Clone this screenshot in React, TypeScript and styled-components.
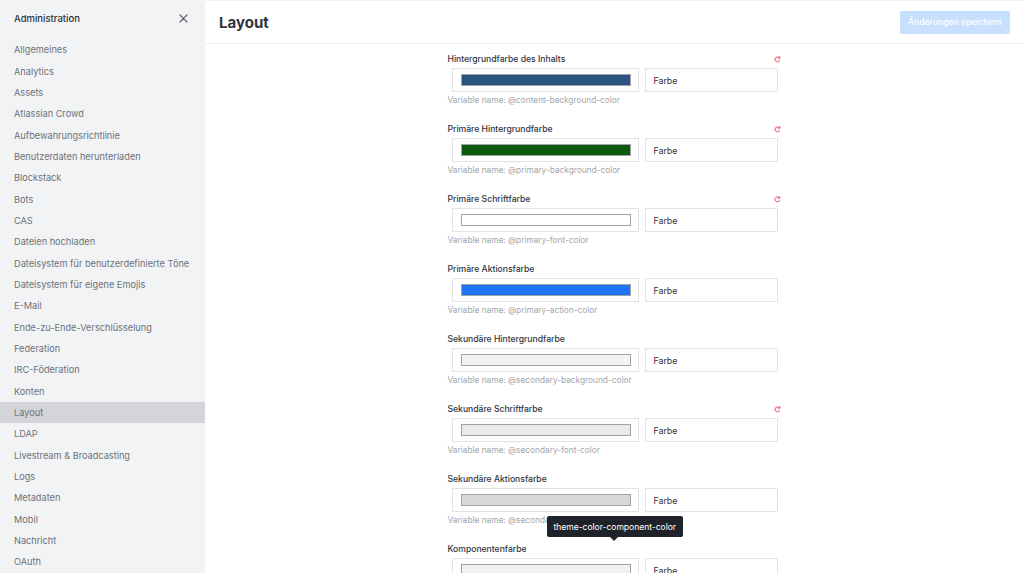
import React from "react";
import styled, { createGlobalStyle } from "styled-components";

const Global = createGlobalStyle`
  html, body { margin: 0; padding: 0; background: #fff; }
  body { font-family: Inter, "Noto Sans", "Liberation Sans", sans-serif; }
  * { box-sizing: border-box; }
`;

const Page = styled.div`
  display: flex;
  width: 1024px;
  height: 573px;
  overflow: hidden;
`;

const Sidebar = styled.aside`
  width: 205px;
  flex: none;
  background: #f2f3f5;
  display: flex;
  flex-direction: column;
`;

const SideHeader = styled.div`
  height: 36px;
  display: flex;
  align-items: center;
  justify-content: space-between;
  padding: 0 17px 0 14px;
  font-size: 9.5px;
  font-weight: 500;
  color: #2f343d;
`;

const CloseBtn = styled.span`
  display: flex;
  color: #6c727a;
`;

const NavList = styled.nav`
  padding-top: 3.33px;
  display: flex;
  flex-direction: column;
`;

const NavItem = styled.div<{ $active?: boolean }>`
  height: 21.33px;
  display: flex;
  align-items: center;
  padding-left: 14px;
  font-size: 9.2px;
  color: #6c727a;
  background: ${(p) => (p.$active ? "#d3d5d9" : "transparent")};
  white-space: nowrap;
`;

const Main = styled.main`
  flex: 1;
  display: flex;
  flex-direction: column;
  border-top: 1px solid #f0f1f3;
`;

const Header = styled.header`
  height: 43px;
  flex: none;
  display: flex;
  align-items: center;
  justify-content: space-between;
  padding: 0 14px 0 14px;
  border-bottom: 1px solid #eef0f2;
`;

const Title = styled.h1`
  margin: 0;
  font-size: 15px;
  font-weight: 700;
  color: #2f343d;
`;

const SaveButton = styled.button`
  width: 110px;
  height: 23px;
  border: none;
  border-radius: 2px;
  background: #c7e0fd;
  color: #fff;
  font-family: inherit;
  font-size: 8.6px;
  font-weight: 500;
  white-space: nowrap;
  padding: 0;
`;

const Scroll = styled.div`
  flex: 1;
  padding: 9px 1px 0 0;
  display: flex;
  justify-content: center;
`;

const Column = styled.div`
  width: 333px;
  position: relative;
  display: flex;
  flex-direction: column;
`;

const Field = styled.div`
  display: flex;
  flex-direction: column;
  margin-bottom: 17px;
`;

const LabelRow = styled.div`
  height: 12px;
  display: flex;
  align-items: center;
  justify-content: space-between;
  font-size: 8.6px;
  font-weight: 500;
  color: #2f343d;
  margin-bottom: 3px;
`;

const ResetIcon = styled.span`
  display: flex;
`;

const InputRow = styled.div`
  height: 24px;
  display: flex;
  gap: 6px;
  padding: 0 3px 0 4px;
`;

const SwatchBox = styled.div`
  width: 187px;
  flex: none;
  border: 1px solid #e1e3e6;
  display: flex;
  align-items: center;
  padding: 0 7px 0 8px;
`;

const Swatch = styled.div<{ $color: string }>`
  flex: 1;
  height: 12px;
  background: ${(p) => p.$color};
  border: 1px solid #9ea2a8;
`;

const TextBox = styled.div`
  flex: 1;
  border: 1px solid #e1e3e6;
  display: flex;
  align-items: center;
  padding-left: 8px;
  font-size: 8.8px;
  color: #2f343d;
`;

const Hint = styled.div`
  height: 12px;
  margin-top: 2px;
  display: flex;
  align-items: center;
  font-size: 8.3px;
  color: #a2a6ab;
`;

const Tooltip = styled.div`
  position: absolute;
  left: 99px;
  top: 463px;
  height: 21px;
  padding: 0 7px;
  display: flex;
  align-items: center;
  background: #1f2329;
  color: #fff;
  font-size: 8.5px;
  border-radius: 2px;
  white-space: nowrap;
  &::after {
    content: "";
    position: absolute;
    left: 63px;
    bottom: -4px;
    border-left: 4px solid transparent;
    border-right: 4px solid transparent;
    border-top: 4px solid #1f2329;
  }
`;

const navItems = [
  "Allgemeines",
  "Analytics",
  "Assets",
  "Atlassian Crowd",
  "Aufbewahrungsrichtlinie",
  "Benutzerdaten herunterladen",
  "Blockstack",
  "Bots",
  "CAS",
  "Dateien hochladen",
  "Dateisystem für benutzerdefinierte Töne",
  "Dateisystem für eigene Emojis",
  "E-Mail",
  "Ende-zu-Ende-Verschlüsselung",
  "Federation",
  "IRC-Föderation",
  "Konten",
  "Layout",
  "LDAP",
  "Livestream & Broadcasting",
  "Logs",
  "Metadaten",
  "Mobil",
  "Nachricht",
  "OAuth",
];

const fields = [
  { label: "Hintergrundfarbe des Inhalts", color: "#2a5580", variable: "@content-background-color", reset: true },
  { label: "Primäre Hintergrundfarbe", color: "#0c5a0c", variable: "@primary-background-color", reset: true },
  { label: "Primäre Schriftfarbe", color: "#ffffff", variable: "@primary-font-color", reset: true },
  { label: "Primäre Aktionsfarbe", color: "#1d74f5", variable: "@primary-action-color", reset: false },
  { label: "Sekundäre Hintergrundfarbe", color: "#f2f3f5", variable: "@secondary-background-color", reset: false },
  { label: "Sekundäre Schriftfarbe", color: "#eaeaea", variable: "@secondary-font-color", reset: true },
  { label: "Sekundäre Aktionsfarbe", color: "#d8d8d8", variable: "@secondary-action-color", reset: false },
  { label: "Komponentenfarbe", color: "#f0f0f0", variable: "@component-color", reset: false },
];

const Reset = () => (
  <svg width="7" height="7" viewBox="0 0 10 10" fill="none">
    <path d="M8.3 6.2A3.6 3.6 0 1 1 7.6 2.4" stroke="#f5455c" strokeWidth="1.4" strokeLinecap="round" />
    <path d="M8.2 0.8v2.3H5.9" stroke="#f5455c" strokeWidth="1.4" strokeLinecap="round" strokeLinejoin="round" />
  </svg>
);

export default function App() {
  return (
    <>
      <Global />
      <Page>
        <Sidebar>
          <SideHeader>
            <span>Administration</span>
            <CloseBtn>
              <svg width="9" height="9" viewBox="0 0 10 10">
                <path d="M1 1L9 9M9 1L1 9" stroke="#4a5058" strokeWidth="1.2" strokeLinecap="round" />
              </svg>
            </CloseBtn>
          </SideHeader>
          <NavList>
            {navItems.map((n) => (
              <NavItem key={n} $active={n === "Layout"}>
                {n}
              </NavItem>
            ))}
          </NavList>
        </Sidebar>
        <Main>
          <Header>
            <Title>Layout</Title>
            <SaveButton>Änderungen speichern</SaveButton>
          </Header>
          <Scroll>
            <Column>
              {fields.map((f) => (
                <Field key={f.label}>
                  <LabelRow>
                    <span>{f.label}</span>
                    {f.reset && (
                      <ResetIcon>
                        <Reset />
                      </ResetIcon>
                    )}
                  </LabelRow>
                  <InputRow>
                    <SwatchBox>
                      <Swatch $color={f.color} />
                    </SwatchBox>
                    <TextBox>Farbe</TextBox>
                  </InputRow>
                  <Hint>Variable name: {f.variable}</Hint>
                </Field>
              ))}
              <Tooltip>theme-color-component-color</Tooltip>
            </Column>
          </Scroll>
        </Main>
      </Page>
    </>
  );
}
